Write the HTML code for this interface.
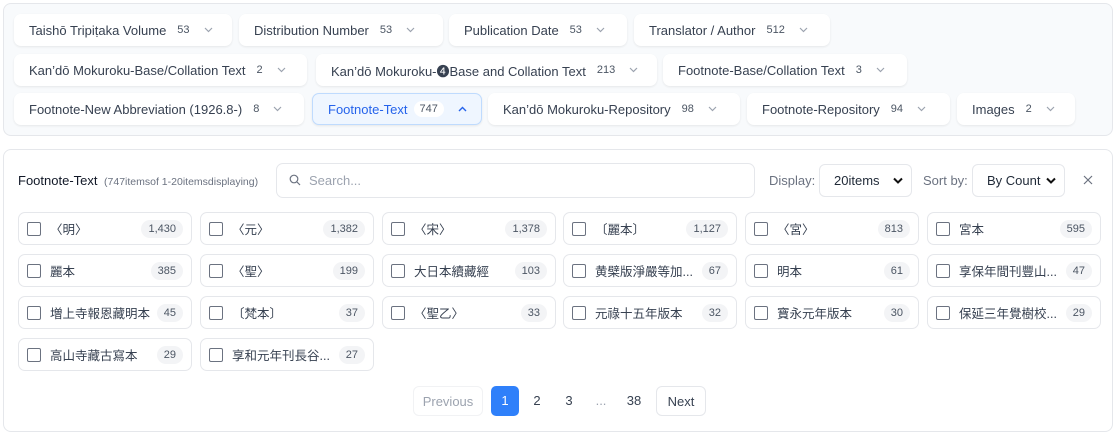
<!DOCTYPE html>
<html><head><meta charset="utf-8"><style>
*{box-sizing:border-box;margin:0;padding:0}
body{width:1116px;height:434px;background:#fff;font-family:"Liberation Sans","Noto Sans CJK JP",sans-serif;color:#374151;position:relative;overflow:hidden}
.top{position:absolute;left:3px;top:3px;width:1110px;height:133px;background:#f8fafc;border:1px solid #e5e7eb;border-radius:8px}
.chip{position:absolute;height:32px;background:#fff;border-radius:7px;box-shadow:0 1px 2px rgba(0,0,0,.08);display:flex;align-items:center;padding-left:15px;font-size:13px;color:#374151;white-space:nowrap}
.chip .c{font-size:11px;margin-left:11px;color:#4b5563}
.chip svg{margin-left:14px}
.chip.act{background:#eff6ff;border:1px solid #bfdbfe;color:#2563eb}
.chip.act .c{background:#fff;border-radius:9px;padding:2px 6px;margin-left:6px}
.bot{position:absolute;left:3px;top:149px;width:1110px;height:283px;background:#fff;border:1px solid #e5e7eb;border-radius:8px}
.abs{position:absolute}
.box{position:absolute;border:1px solid #e5e7eb;border-radius:7px;background:#fff}
.sel{position:absolute;top:164px;height:33px;border:1px solid #e5e7eb;border-radius:6px;font-size:13px;display:flex;align-items:center;padding-left:14px;color:#1f2937}
.sel svg{position:absolute;right:8px;top:12px}
.it{position:absolute;width:174px;height:33px;border:1px solid #e5e7eb;border-radius:7px;display:flex;align-items:center;font-size:12.5px;color:#374151}
.it i{display:block;width:14px;height:14px;border:1px solid #6b7280;border-radius:2px;margin-left:8px;margin-right:9px}
.it b{font-weight:normal;position:absolute;right:8px;top:7px;height:18px;line-height:18px;padding:0 7px;background:#f3f4f6;border-radius:9px;font-size:11px;color:#4b5563}
.pg{position:absolute;top:386px;height:30px;line-height:30px;font-size:13px;text-align:center;color:#374151}
</style></head><body>
<div class="top"></div>
<div class="chip" style="left:14px;top:14px;width:218px">Taishō Tripiṭaka Volume<span class="c">53</span><svg width="9" height="6" viewBox="0 0 9 6"><path d="M1 1l3.5 3.5L8 1" fill="none" stroke="#9ca3af" stroke-width="1.2"/></svg></div>
<div class="chip" style="left:239px;top:14px;width:204px">Distribution Number<span class="c">53</span><svg width="9" height="6" viewBox="0 0 9 6"><path d="M1 1l3.5 3.5L8 1" fill="none" stroke="#9ca3af" stroke-width="1.2"/></svg></div>
<div class="chip" style="left:449px;top:14px;width:178px">Publication Date<span class="c">53</span><svg width="9" height="6" viewBox="0 0 9 6"><path d="M1 1l3.5 3.5L8 1" fill="none" stroke="#9ca3af" stroke-width="1.2"/></svg></div>
<div class="chip" style="left:634px;top:14px;width:196px">Translator / Author<span class="c">512</span><svg width="9" height="6" viewBox="0 0 9 6"><path d="M1 1l3.5 3.5L8 1" fill="none" stroke="#9ca3af" stroke-width="1.2"/></svg></div>
<div class="chip" style="left:14px;top:54px;width:293px">Kan’dō Mokuroku-Base/Collation Text<span class="c">2</span><svg width="9" height="6" viewBox="0 0 9 6"><path d="M1 1l3.5 3.5L8 1" fill="none" stroke="#9ca3af" stroke-width="1.2"/></svg></div>
<div class="chip" style="left:316px;top:54px;width:341px">Kan’dō Mokuroku-❹Base and Collation Text<span class="c">213</span><svg width="9" height="6" viewBox="0 0 9 6"><path d="M1 1l3.5 3.5L8 1" fill="none" stroke="#9ca3af" stroke-width="1.2"/></svg></div>
<div class="chip" style="left:663px;top:54px;width:244px">Footnote-Base/Collation Text<span class="c">3</span><svg width="9" height="6" viewBox="0 0 9 6"><path d="M1 1l3.5 3.5L8 1" fill="none" stroke="#9ca3af" stroke-width="1.2"/></svg></div>
<div class="chip" style="left:14px;top:93px;width:290px">Footnote-New Abbreviation (1926.8-)<span class="c">8</span><svg width="9" height="6" viewBox="0 0 9 6"><path d="M1 1l3.5 3.5L8 1" fill="none" stroke="#9ca3af" stroke-width="1.2"/></svg></div>
<div class="chip act" style="left:312px;top:93px;width:170px">Footnote-Text<span class="c">747</span><svg width="9" height="6" viewBox="0 0 9 6"><path d="M1 5l3.5-3.5L8 5" fill="none" stroke="#2563eb" stroke-width="1.4"/></svg></div>
<div class="chip" style="left:488px;top:93px;width:252px">Kan’dō Mokuroku-Repository<span class="c">98</span><svg width="9" height="6" viewBox="0 0 9 6"><path d="M1 1l3.5 3.5L8 1" fill="none" stroke="#9ca3af" stroke-width="1.2"/></svg></div>
<div class="chip" style="left:747px;top:93px;width:203px">Footnote-Repository<span class="c">94</span><svg width="9" height="6" viewBox="0 0 9 6"><path d="M1 1l3.5 3.5L8 1" fill="none" stroke="#9ca3af" stroke-width="1.2"/></svg></div>
<div class="chip" style="left:957px;top:93px;width:118px">Images<span class="c">2</span><svg width="9" height="6" viewBox="0 0 9 6"><path d="M1 1l3.5 3.5L8 1" fill="none" stroke="#9ca3af" stroke-width="1.2"/></svg></div>

<div class="bot"></div>
<div class="abs" style="left:18px;top:173px;font-size:13px;color:#111827">Footnote-Text <span style="font-size:10.5px;color:#6b7280">&nbsp;(747itemsof 1-20itemsdisplaying)</span></div>
<div class="box" style="left:276px;top:163px;width:479px;height:35px"></div>
<svg class="abs" style="left:289px;top:174px" width="12" height="12" viewBox="0 0 12 12"><circle cx="5" cy="5" r="3.8" fill="none" stroke="#6b7280" stroke-width="1.2"/><path d="M8 8l3 3" stroke="#6b7280" stroke-width="1.2"/></svg>
<div class="abs" style="left:309px;top:173px;font-size:13px;color:#9ca3af">Search...</div>
<div class="abs" style="left:769px;top:173px;font-size:13px;color:#6b7280">Display:</div>
<div class="sel" style="left:819px;width:93px">20items<svg width="10" height="7" viewBox="0 0 10 7"><path d="M1 1.5l4 4 4-4" fill="none" stroke="#111" stroke-width="2"/></svg></div>
<div class="abs" style="left:923px;top:173px;font-size:13px;color:#6b7280">Sort by:</div>
<div class="sel" style="left:972px;width:93px">By Count<svg width="10" height="7" viewBox="0 0 10 7"><path d="M1 1.5l4 4 4-4" fill="none" stroke="#111" stroke-width="2"/></svg></div>
<svg class="abs" style="left:1083px;top:175px" width="10" height="10" viewBox="0 0 10 10"><path d="M1 1l8 8M9 1l-8 8" stroke="#6b7280" stroke-width="1.2"/></svg>

<div class="it" style="left:18px;top:212px"><i></i>〈明〉<b>1,430</b></div>
<div class="it" style="left:200px;top:212px"><i></i>〈元〉<b>1,382</b></div>
<div class="it" style="left:382px;top:212px"><i></i>〈宋〉<b>1,378</b></div>
<div class="it" style="left:563px;top:212px"><i></i>〔麗本〕<b>1,127</b></div>
<div class="it" style="left:745px;top:212px"><i></i>〈宮〉<b>813</b></div>
<div class="it" style="left:927px;top:212px"><i></i>宮本<b>595</b></div>
<div class="it" style="left:18px;top:254px"><i></i>麗本<b>385</b></div>
<div class="it" style="left:200px;top:254px"><i></i>〈聖〉<b>199</b></div>
<div class="it" style="left:382px;top:254px"><i></i>大日本續藏經<b>103</b></div>
<div class="it" style="left:563px;top:254px"><i></i>黄檗版淨嚴等加...<b>67</b></div>
<div class="it" style="left:745px;top:254px"><i></i>明本<b>61</b></div>
<div class="it" style="left:927px;top:254px"><i></i>享保年間刊豐山...<b>47</b></div>
<div class="it" style="left:18px;top:296px"><i></i>増上寺報恩藏明本<b>45</b></div>
<div class="it" style="left:200px;top:296px"><i></i>〔梵本〕<b>37</b></div>
<div class="it" style="left:382px;top:296px"><i></i>〈聖乙〉<b>33</b></div>
<div class="it" style="left:563px;top:296px"><i></i>元祿十五年版本<b>32</b></div>
<div class="it" style="left:745px;top:296px"><i></i>寶永元年版本<b>30</b></div>
<div class="it" style="left:927px;top:296px"><i></i>保延三年覺樹校...<b>29</b></div>
<div class="it" style="left:18px;top:338px"><i></i>高山寺藏古寫本<b>29</b></div>
<div class="it" style="left:200px;top:338px"><i></i>享和元年刊長谷...<b>27</b></div>

<div class="pg" style="left:413px;width:70px;border:1px solid #f1f2f4;border-radius:6px;color:#9ca3af">Previous</div>
<div class="pg" style="left:491px;width:28px;background:#2f80fa;color:#fff;border-radius:5px">1</div>
<div class="pg" style="left:527px;width:20px">2</div>
<div class="pg" style="left:559px;width:20px">3</div>
<div class="pg" style="left:591px;width:20px;color:#9ca3af">...</div>
<div class="pg" style="left:622px;width:24px">38</div>
<div class="pg" style="left:656px;width:50px;border:1px solid #e5e7eb;border-radius:6px">Next</div>
</body></html>
